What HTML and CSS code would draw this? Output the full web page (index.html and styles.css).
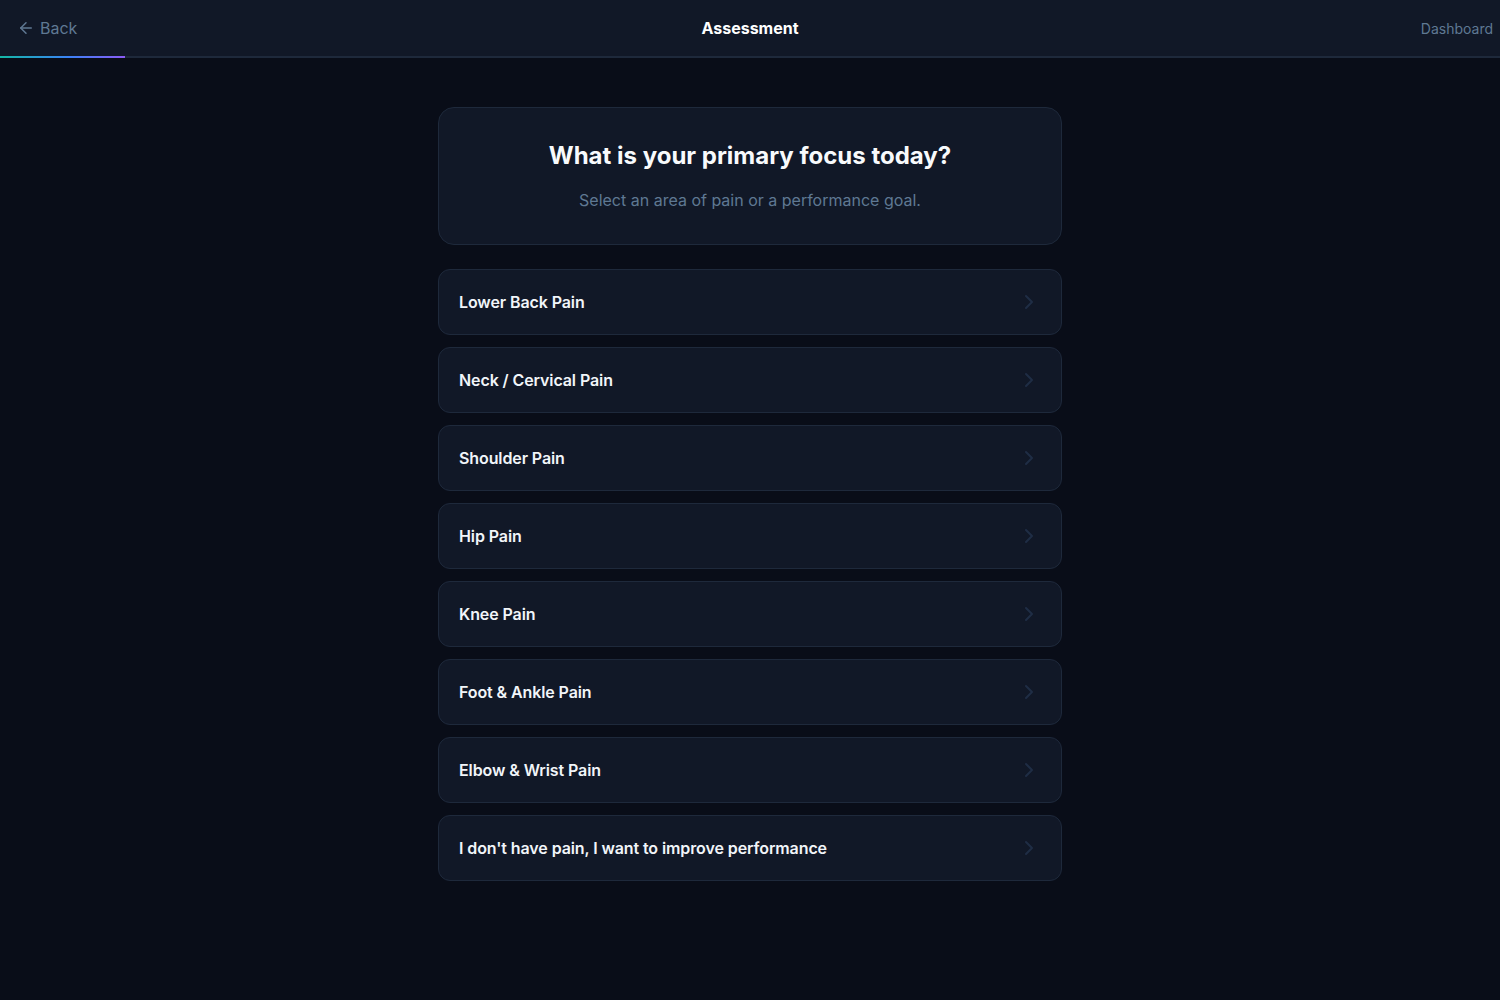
FILE: index.html
```html
<!DOCTYPE html>
<html lang="en">
<head>
<meta charset="utf-8">
<title>Assessment</title>
<link rel="stylesheet" href="styles.css">
</head>
<body>
<header class="topbar">
  <div class="topbar-inner">
    <a class="back" href="#">
      <svg width="18" height="18" viewBox="0 0 24 24" fill="none" stroke="currentColor" stroke-width="2" stroke-linecap="round" stroke-linejoin="round"><path d="m12 19-7-7 7-7"/><path d="M19 12H5"/></svg>
      <span>Back</span>
    </a>
    <div class="title">Assessment</div>
    <a class="dash" href="#">Dashboard</a>
  </div>
  <div class="progress"><div class="progress-fill" style="width:125px"></div></div>
</header>
<main class="main">
  <div class="wrap">
    <section class="intro">
      <h1>What is your primary focus today?</h1>
      <p>Select an area of pain or a performance goal.</p>
    </section>
    <ul class="options">
      <li class="option"><span>Lower Back Pain</span><svg class="chev" width="24" height="24" viewBox="0 0 24 24" fill="none" stroke="currentColor" stroke-width="2" stroke-linecap="round" stroke-linejoin="round"><path d="m9 18 6-6-6-6"/></svg></li>
      <li class="option"><span>Neck / Cervical Pain</span><svg class="chev" width="24" height="24" viewBox="0 0 24 24" fill="none" stroke="currentColor" stroke-width="2" stroke-linecap="round" stroke-linejoin="round"><path d="m9 18 6-6-6-6"/></svg></li>
      <li class="option"><span>Shoulder Pain</span><svg class="chev" width="24" height="24" viewBox="0 0 24 24" fill="none" stroke="currentColor" stroke-width="2" stroke-linecap="round" stroke-linejoin="round"><path d="m9 18 6-6-6-6"/></svg></li>
      <li class="option"><span>Hip Pain</span><svg class="chev" width="24" height="24" viewBox="0 0 24 24" fill="none" stroke="currentColor" stroke-width="2" stroke-linecap="round" stroke-linejoin="round"><path d="m9 18 6-6-6-6"/></svg></li>
      <li class="option"><span>Knee Pain</span><svg class="chev" width="24" height="24" viewBox="0 0 24 24" fill="none" stroke="currentColor" stroke-width="2" stroke-linecap="round" stroke-linejoin="round"><path d="m9 18 6-6-6-6"/></svg></li>
      <li class="option"><span>Foot &amp; Ankle Pain</span><svg class="chev" width="24" height="24" viewBox="0 0 24 24" fill="none" stroke="currentColor" stroke-width="2" stroke-linecap="round" stroke-linejoin="round"><path d="m9 18 6-6-6-6"/></svg></li>
      <li class="option"><span>Elbow &amp; Wrist Pain</span><svg class="chev" width="24" height="24" viewBox="0 0 24 24" fill="none" stroke="currentColor" stroke-width="2" stroke-linecap="round" stroke-linejoin="round"><path d="m9 18 6-6-6-6"/></svg></li>
      <li class="option"><span>I don't have pain, I want to improve performance</span><svg class="chev" width="24" height="24" viewBox="0 0 24 24" fill="none" stroke="currentColor" stroke-width="2" stroke-linecap="round" stroke-linejoin="round"><path d="m9 18 6-6-6-6"/></svg></li>
    </ul>
  </div>
</main>
</body>
</html>
```

FILE: styles.css
```css
* { box-sizing: border-box; }
html, body { margin: 0; padding: 0; }
body {
  background: #090d18;
  color: #f1f5f9;
  font-family: Inter, "Noto Sans", sans-serif;
  min-height: 1000px;
}
a { text-decoration: none; }

.topbar { background: #111827; }
.topbar-inner {
  height: 56px;
  display: grid;
  grid-template-columns: 1fr auto 1fr;
  align-items: center;
  padding: 0 7px;
}
.back {
  display: flex;
  align-items: center;
  gap: 5px;
  color: #5f7893;
  font-size: 16px;
  justify-self: start;
  margin-left: 10px;
}
.back svg { color: #5f7893; }
.title {
  font-weight: 700;
  font-size: 16px;
  color: #ffffff;
}
.dash {
  justify-self: end;
  color: #5f7893;
  font-size: 14px;
}
.progress {
  height: 2px;
  background: #1e293b;
}
.progress-fill {
  height: 100%;
  background: linear-gradient(90deg, #14b8a6, #3b82f6 55%, #8b5cf6);
}

.main {
  display: flex;
  justify-content: center;
  padding-top: 49px;
}
.wrap {
  width: 624px;
  display: flex;
  flex-direction: column;
  gap: 24px;
}
.intro {
  background: #111827;
  border: 1px solid #1e293b;
  border-radius: 16px;
  padding: 32px;
  text-align: center;
}
.intro h1 {
  margin: 0;
  font-size: 24px;
  line-height: 32px;
  font-weight: 700;
  color: #f8fafc;
}
.intro p {
  margin: 16px 0 0;
  font-size: 16px;
  line-height: 24px;
  color: #5f7893;
}
.options {
  list-style: none;
  margin: 0;
  padding: 0;
  display: flex;
  flex-direction: column;
  gap: 12px;
}
.option {
  display: flex;
  align-items: center;
  justify-content: space-between;
  background: #111827;
  border: 1px solid #1e293b;
  border-radius: 12px;
  padding: 20px 20px 20px 20px;
  font-size: 16px;
  line-height: 24px;
  font-weight: 600;
  letter-spacing: -0.1px;
  color: #f1f5f9;
}
.chev {
  color: #1f2d45;
  flex: none;
  margin: -4px 0;
}
```
